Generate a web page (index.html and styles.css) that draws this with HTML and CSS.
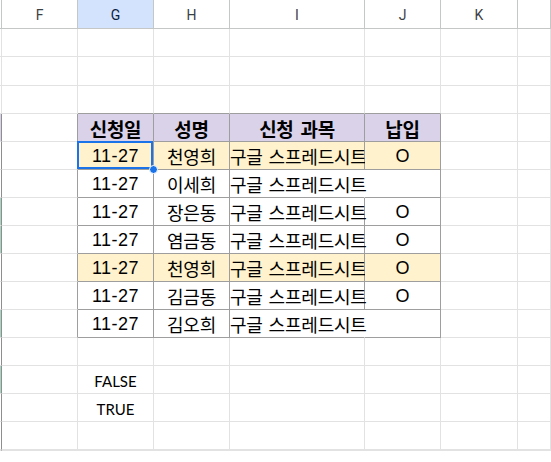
FILE: index.html
```html
<!DOCTYPE html>
<html lang="ko">
<head>
<meta charset="utf-8">
<title>Sheet</title>
<link rel="stylesheet" href="styles.css">
</head>
<body>
<div class="sheet">
  <!-- column headers -->
  <div class="c ch"></div>
  <div class="c ch">F</div>
  <div class="c ch ch-sel">G</div>
  <div class="c ch">H</div>
  <div class="c ch">I</div>
  <div class="c ch">J</div>
  <div class="c ch">K</div>
  <div class="c ch"></div>

  <!-- row 1 -->
  <div class="c"></div><div class="c"></div><div class="c"></div><div class="c"></div><div class="c"></div><div class="c"></div><div class="c"></div><div class="c"></div>
  <!-- row 2 -->
  <div class="c"></div><div class="c"></div><div class="c"></div><div class="c"></div><div class="c"></div><div class="c"></div><div class="c"></div><div class="c"></div>
  <!-- row 3 -->
  <div class="c"></div><div class="c"></div><div class="c tb"></div><div class="c tb"></div><div class="c tb"></div><div class="c tb"></div><div class="c"></div><div class="c"></div>

  <!-- row 4: table header -->
  <div class="c e lav"></div><div class="c tl"></div>
  <div class="c t th">신청일</div>
  <div class="c t th">성명</div>
  <div class="c t th sp">신청 과목</div>
  <div class="c t th">납입</div>
  <div class="c"></div><div class="c"></div>

  <!-- row 5 -->
  <div class="c e"></div><div class="c tl"></div>
  <div class="c t hl num sel">11-27</div>
  <div class="c t hl ko">천영희</div>
  <div class="c t hl ko left">구글 스프레드시트</div>
  <div class="c t hl mark">O</div>
  <div class="c"></div><div class="c"></div>

  <!-- row 6 -->
  <div class="c e"></div><div class="c tl"></div>
  <div class="c t num">11-27</div>
  <div class="c t ko">이세희</div>
  <div class="c t ko left ov">구글 스프레드시트</div>
  <div class="c t mark"></div>
  <div class="c"></div><div class="c"></div>

  <!-- row 7 -->
  <div class="c e grn"></div><div class="c tl"></div>
  <div class="c t num">11-27</div>
  <div class="c t ko">장은동</div>
  <div class="c t ko left">구글 스프레드시트</div>
  <div class="c t mark">O</div>
  <div class="c"></div><div class="c"></div>

  <!-- row 8 -->
  <div class="c e grn"></div><div class="c tl"></div>
  <div class="c t num">11-27</div>
  <div class="c t ko">염금동</div>
  <div class="c t ko left">구글 스프레드시트</div>
  <div class="c t mark">O</div>
  <div class="c"></div><div class="c"></div>

  <!-- row 9 -->
  <div class="c e"></div><div class="c tl"></div>
  <div class="c t hl num">11-27</div>
  <div class="c t hl ko">천영희</div>
  <div class="c t hl ko left">구글 스프레드시트</div>
  <div class="c t hl mark">O</div>
  <div class="c"></div><div class="c"></div>

  <!-- row 10 -->
  <div class="c e"></div><div class="c tl"></div>
  <div class="c t num">11-27</div>
  <div class="c t ko">김금동</div>
  <div class="c t ko left">구글 스프레드시트</div>
  <div class="c t mark">O</div>
  <div class="c"></div><div class="c"></div>

  <!-- row 11 -->
  <div class="c e grn"></div><div class="c tl"></div>
  <div class="c t num">11-27</div>
  <div class="c t ko">김오희</div>
  <div class="c t ko left ov">구글 스프레드시트</div>
  <div class="c t mark"></div>
  <div class="c"></div><div class="c"></div>

  <!-- row 12 -->
  <div class="c e"></div><div class="c"></div><div class="c"></div><div class="c"></div><div class="c"></div><div class="c"></div><div class="c"></div><div class="c"></div>
  <!-- row 13 -->
  <div class="c e grn"></div><div class="c"></div><div class="c bool">FALSE</div><div class="c"></div><div class="c"></div><div class="c"></div><div class="c"></div><div class="c"></div>
  <!-- row 14 -->
  <div class="c e"></div><div class="c"></div><div class="c bool">TRUE</div><div class="c"></div><div class="c"></div><div class="c"></div><div class="c"></div><div class="c"></div>
  <!-- row 15 -->
  <div class="c e"></div><div class="c"></div><div class="c"></div><div class="c"></div><div class="c"></div><div class="c"></div><div class="c"></div><div class="c"></div>
  <!-- row 16 -->
  <div class="c e"></div><div class="c"></div><div class="c"></div><div class="c"></div><div class="c"></div><div class="c"></div><div class="c"></div><div class="c"></div>
</div>
</body>
</html>
```

FILE: styles.css
```css
html, body {
  margin: 0;
  padding: 0;
  background: #ffffff;
  overflow: hidden;
}

.sheet {
  display: grid;
  width: 551px;
  grid-template-columns: 2px 76px 76px 76px 135px 76px 77px 1fr;
  grid-template-rows: 29px 28px 29px repeat(13, 28px);
  font-family: "Noto Sans CJK KR", "Noto Sans", sans-serif;
  color: #000000;
}

.c {
  box-sizing: border-box;
  border-right: 1px solid #e2e2e2;
  border-bottom: 1px solid #e2e2e2;
  display: flex;
  align-items: center;
  justify-content: center;
  white-space: nowrap;
  min-width: 0;
}

/* column header row */
.ch {
  border-right-color: #c4c7c5;
  border-bottom-color: #c4c7c5;
  font-family: Roboto, "Liberation Sans", sans-serif;
  font-size: 14px;
  color: #3c4043;
  padding-top: 1px;
}
.ch-sel {
  background: #d3e3fd;
  color: #0b1f3f;
}

/* column E remnant */
.e {
  border-right-color: #8e8e8e;
}
.lav { background: #d9d2e9; }
.grn { background: #a6d6c3; }

/* table edges */
.tb { border-bottom-color: #9e9e9e; }
.tl { border-right-color: #9e9e9e; }
.t {
  border-right-color: #9e9e9e;
  border-bottom-color: #9e9e9e;
}

.th {
  background: #d9d2e9;
  font-weight: 700;
  font-size: 19px;
  letter-spacing: -0.3px;
  padding-top: 1px;
}
.sp { word-spacing: 2px; }

.hl { background: #fff2cc; }

.num {
  font-family: "Liberation Sans", Arial, sans-serif;
  font-size: 18px;
  letter-spacing: 0.5px;
  padding-top: 1px;
}

.ko {
  font-size: 18px;
  letter-spacing: -0.2px;
  padding-top: 1px;
}

.left {
  justify-content: flex-start;
  padding-left: 0;
  word-spacing: 1px;
}

.ov { border-right-color: transparent; }

.mark {
  font-family: "Liberation Sans", Arial, sans-serif;
  font-size: 18px;
  padding-top: 1px;
}

.bool {
  font-family: Lato, "Liberation Sans", Arial, sans-serif;
  font-size: 15px;
  color: #000000;
  padding-top: 2px;
}

/* active cell selection */
.sel { position: relative; }
.sel::before {
  content: "";
  position: absolute;
  left: -1px;
  top: -1px;
  right: 0;
  bottom: 0;
  border: 2px solid #1a73e8;
}
.sel::after {
  content: "";
  position: absolute;
  right: -5px;
  bottom: -5px;
  width: 7px;
  height: 7px;
  border-radius: 50%;
  background: #1a73e8;
  border: 1px solid #ffffff;
}
```
